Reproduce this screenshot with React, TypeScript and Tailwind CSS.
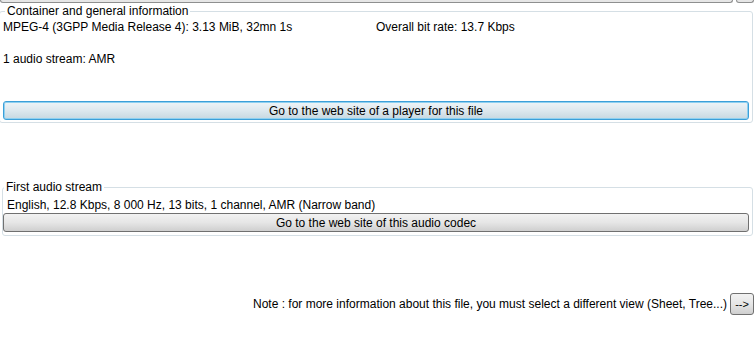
import React from "react";

const font = { fontFamily: '"Liberation Sans", Arial, sans-serif' };

export default function App() {
  return (
    <div className="w-[756px] h-[343px] bg-white text-[12px] leading-[14px] text-black overflow-hidden" style={font}>
      {/* cut-off buttons at top */}
      <div className="flex h-[4px] gap-[3px]">
        <div className="w-[733px] h-[4px] -mt-[1px] border border-t-0 border-[#8e8f8f] rounded-b-[3px] bg-[#e6e6e6]" />
        <div className="w-[18px] h-[4px] -mt-[1px] border border-t-0 border-[#8e8f8f] rounded-b-[3px] bg-[#e6e6e6]" />
      </div>

      {/* Group 1 */}
      <fieldset className="ml-[-1px] w-[754px] border border-[#d5dfe5] rounded-[3px] px-[3px] pb-[2px] pt-0">
        <legend className="ml-[2px] px-[2px] h-[14px] leading-[14px]">Container and general information</legend>
        <div className="grid grid-cols-[373px_1fr] mt-[2px]">
          <div>MPEG-4 (3GPP Media Release 4): 3.13 MiB, 32mn 1s</div>
          <div>Overall bit rate: 13.7 Kbps</div>
        </div>
        <div className="mt-[18px]">1 audio stream: AMR</div>
        <button className="mt-[35px] w-[746px] h-[19px] flex items-center justify-center border border-[#3c9fd8] rounded-[3px] bg-gradient-to-b from-[#eef4f7] via-[#dde8ee] to-[#c7d8e1] shadow-[inset_0_0_0_1px_#8fd0f0]">
          Go to the web site of a player for this file
        </button>
      </fieldset>

      {/* Group 2 */}
      <fieldset className="mt-[57px] ml-[2px] w-[751px] border border-[#d5dfe5] rounded-[3px] px-0 pb-[3px] pt-0">
        <legend className="ml-[1px] px-[2px] h-[14px] leading-[14px]">First audio stream</legend>
        <div className="mt-[4px] pl-[4px]">English, 12.8 Kbps, 8 000 Hz, 13 bits, 1 channel, AMR (Narrow band)</div>
        <button className="mt-[1px] w-[746px] h-[19px] flex items-center justify-center border border-[#707070] rounded-[3px] bg-gradient-to-b from-[#f2f2f2] via-[#e6e6e6] to-[#cfcfcf]">
          Go to the web site of this audio codec
        </button>
      </fieldset>

      {/* Note */}
      <div className="mt-[57px] flex items-center justify-end pr-[2px] gap-[3px]">
        <span>Note : for more information about this file, you must select a different view (Sheet, Tree...)</span>
        <button className="w-[24px] h-[22px] flex items-center justify-center border border-[#707070] rounded-[3px] bg-gradient-to-b from-[#f2f2f2] via-[#e6e6e6] to-[#cfcfcf] text-[11px]">
          --&gt;
        </button>
      </div>
    </div>
  );
}
